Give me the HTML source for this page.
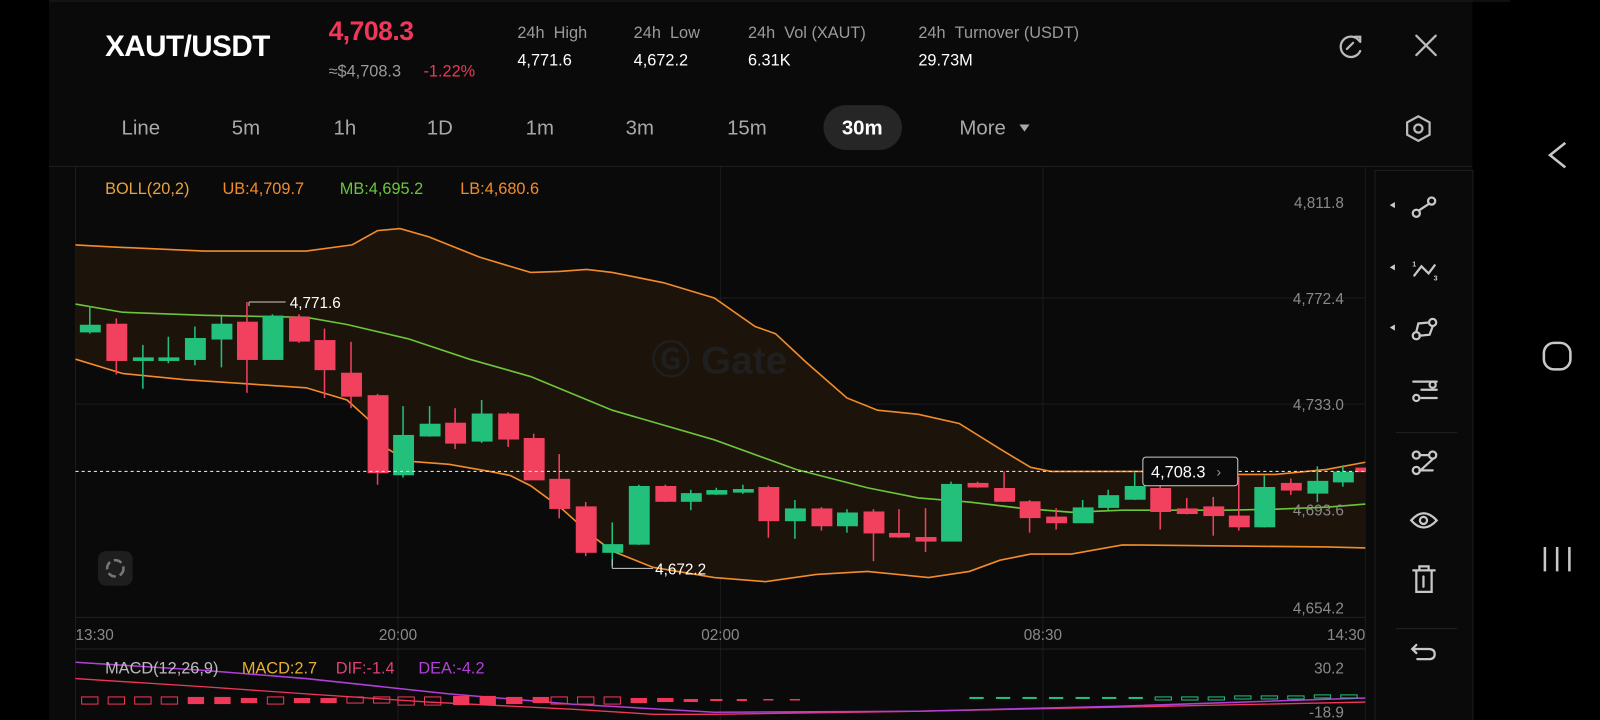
<!DOCTYPE html>
<html><head><meta charset="utf-8"><style>
html,body{margin:0;padding:0;background:#000;width:1600px;height:720px;overflow:hidden}
svg{display:block;font-family:"Liberation Sans",Arial,sans-serif}
</style></head><body>
<svg width="1600" height="720" viewBox="0 0 1568 705.6" preserveAspectRatio="none" xmlns="http://www.w3.org/2000/svg">
<rect width="1568" height="706" fill="#000"/>
<rect x="48" y="0" width="1395" height="706" fill="#0a0a0a"/>
<line x1="48" y1="1" x2="1480" y2="1" stroke="#1e1e1e"/>
<text x="103" y="55" fill="#fff" font-size="29" font-weight="bold" letter-spacing="-0.5">XAUT/USDT</text>
<text x="322" y="39" fill="#f0375a" font-size="26" font-weight="bold" letter-spacing="-0.5">4,708.3</text>
<text x="322" y="75" fill="#9a9a9a" font-size="16">≈$4,708.3</text>
<text x="415" y="75" fill="#f0375a" font-size="16">-1.22%</text>
<g font-size="16" fill="#9a9a9a">
<text x="507" y="37">24h&#160;&#160;High</text><text x="621" y="37">24h&#160;&#160;Low</text>
<text x="733" y="37">24h&#160;&#160;Vol (XAUT)</text><text x="900" y="37">24h&#160;&#160;Turnover (USDT)</text></g>
<g font-size="16" fill="#fff">
<text x="507" y="64">4,771.6</text><text x="621" y="64">4,672.2</text>
<text x="733" y="64">6.31K</text><text x="900" y="64">29.73M</text></g>
<g stroke="#bbb" stroke-width="2.2" fill="none" stroke-linecap="round">
<path d="M1332 40 A10 10 0 1 0 1333 50"/><path d="M1328 36 L1333 36 L1333 41"/><path d="M1320 48 L1326 42"/>
<path d="M1388 35 L1407 54 M1407 35 L1388 54"/>
</g>
<g font-size="20" fill="#a8a8a8" text-anchor="middle">
<text x="138" y="132">Line</text><text x="241" y="132">5m</text><text x="338" y="132">1h</text>
<text x="431" y="132">1D</text><text x="529" y="132">1m</text><text x="627" y="132">3m</text>
<text x="732" y="132">15m</text><text x="963" y="132">More</text></g>
<path d="M999 122 L1009 122 L1004 129Z" fill="#a8a8a8"/>
<rect x="807" y="103" width="77" height="44" rx="22" fill="#262626"/>
<text x="845" y="132" font-size="20" font-weight="bold" fill="#fff" text-anchor="middle">30m</text>
<g stroke="#bbb" stroke-width="2.2" fill="none"><path d="M1390 114 L1401 120 L1401 132 L1390 138 L1379 132 L1379 120Z"/><circle cx="1390" cy="126" r="4"/></g>
<line x1="48" y1="163" x2="1443" y2="163" stroke="#1e1e1e"/>
<g stroke="#1c1c1c"><line x1="74" y1="292" x2="1338" y2="292"/><line x1="74" y1="396" x2="1338" y2="396"/>
<line x1="390" y1="163" x2="390" y2="706"/><line x1="706" y1="163" x2="706" y2="706"/><line x1="1022" y1="163" x2="1022" y2="706"/>
<line x1="74" y1="163" x2="74" y2="706"/><line x1="1338" y1="163" x2="1338" y2="706"/></g>
<line x1="74" y1="605" x2="1338" y2="605" stroke="#222"/>
<line x1="74" y1="636" x2="1338" y2="636" stroke="#222"/>
<rect x="1347.5" y="167" width="96" height="540" fill="#0a0a0a" stroke="#1e1e1e"/>
<line x1="1368" y1="424" x2="1428" y2="424" stroke="#222"/><line x1="1368" y1="616" x2="1428" y2="616" stroke="#222"/>
<path d="M74 240 L110 242 L200 246 L300 246 L345 240 L370 226 L392 224 L420 232 L470 252 L520 267 L548 266 L575 264 L600 267 L650 277 L700 292 L740 320 L760 327 L790 355 L830 390 L860 402 L900 406 L940 415 L980 440 L1010 458 L1030 462 L1100 462 L1150 462 L1200 465 L1250 465 L1300 460 L1338 453 L1338 537 L1300 536 L1200 535 L1100 534 L1050 543 L1010 543 L980 549 L950 560 L910 566 L850 560 L800 563 L750 570 L700 566 L640 556 L600 540 L580 525 L550 498 L520 476 L500 466 L480 462 L440 455 L400 452 L380 440 L360 410 L340 392 L300 380 L240 376 L180 372 L120 366 L74 352Z" fill="#1c130a"/>
<g fill="none" stroke-width="1.6">
<path stroke="#f28c2a" d="M74 240 L110 242 L200 246 L300 246 L345 240 L370 226 L392 224 L420 232 L470 252 L520 267 L548 266 L575 264 L600 267 L650 277 L700 292 L740 320 L760 327 L790 355 L830 390 L860 402 L900 406 L940 415 L980 440 L1010 458 L1030 462 L1100 462 L1150 462 L1200 465 L1250 465 L1300 460 L1338 453"/>
<path stroke="#f28c2a" d="M74 352 L120 366 L180 372 L240 376 L300 380 L340 392 L360 410 L380 440 L400 452 L440 455 L480 462 L500 466 L520 476 L550 498 L580 525 L600 540 L640 556 L700 566 L750 570 L800 563 L850 560 L910 566 L950 560 L980 549 L1010 543 L1050 543 L1100 534 L1200 535 L1300 536 L1338 537"/>
<path stroke="#6cc63a" d="M74 298 L120 306 L200 309 L300 311 L340 318 L400 332 L460 352 L520 369 L600 402 L700 431 L780 460 L850 478 L900 488 L950 492 L1000 498 L1050 502 L1100 500 L1200 500 L1250 499 L1300 497 L1338 494"/>
</g>
<text x="705" y="366" font-size="38" font-weight="bold" fill="#1f1f1f" text-anchor="middle">Ⓖ Gate</text>
<g stroke-width="1.5">
<g stroke="#22c07a" fill="#22c07a">
<line x1="88" y1="300" x2="88" y2="327"/><rect x="79" y="319" width="19" height="6"/>
<line x1="140" y1="338" x2="140" y2="381"/><rect x="131" y="351" width="19" height="2"/>
<line x1="165" y1="330" x2="165" y2="356"/><rect x="156" y="351" width="19" height="2"/>
<line x1="191" y1="320" x2="191" y2="358"/><rect x="182" y="332" width="19" height="20"/>
<line x1="217" y1="310" x2="217" y2="360"/><rect x="208" y="318" width="19" height="14"/>
<line x1="267" y1="308" x2="267" y2="352"/><rect x="258" y="310" width="19" height="42"/>
<line x1="395" y1="398" x2="395" y2="468"/><rect x="386" y="427" width="19" height="38"/>
<line x1="421" y1="398" x2="421" y2="428"/><rect x="412" y="416" width="19" height="11"/>
<line x1="472" y1="392" x2="472" y2="434"/><rect x="463" y="406" width="19" height="26"/>
<line x1="600" y1="512" x2="600" y2="555"/><rect x="591" y="534" width="19" height="7"/>
<line x1="626" y1="475" x2="626" y2="534"/><rect x="617" y="477" width="19" height="56"/>
<line x1="677" y1="480" x2="677" y2="500"/><rect x="668" y="484" width="19" height="7"/>
<line x1="702" y1="478" x2="702" y2="485"/><rect x="693" y="481" width="19" height="3"/>
<line x1="728" y1="475" x2="728" y2="484"/><rect x="719" y="480" width="19" height="2"/>
<line x1="779" y1="490" x2="779" y2="528"/><rect x="770" y="499" width="19" height="11"/>
<line x1="830" y1="499" x2="830" y2="522"/><rect x="821" y="503" width="19" height="12"/>
<line x1="932" y1="472" x2="932" y2="530"/><rect x="923" y="475" width="19" height="55"/>
<line x1="1061" y1="490" x2="1061" y2="512"/><rect x="1052" y="498" width="19" height="14"/>
<line x1="1086" y1="480" x2="1086" y2="500"/><rect x="1077" y="486" width="19" height="11"/>
<line x1="1112" y1="463" x2="1112" y2="490"/><rect x="1103" y="477" width="19" height="12"/>
<line x1="1239" y1="466" x2="1239" y2="517"/><rect x="1230" y="478" width="19" height="38"/>
<line x1="1291" y1="457" x2="1291" y2="492"/><rect x="1282" y="472" width="19" height="11"/>
<line x1="1316" y1="456" x2="1316" y2="477"/><rect x="1307" y="463" width="19" height="9"/>
</g>
<g stroke="#f2405f" fill="#f2405f">
<line x1="114" y1="312" x2="114" y2="367"/><rect x="105" y="318" width="19" height="35"/>
<line x1="242" y1="296" x2="242" y2="385"/><rect x="233" y="316" width="19" height="36"/>
<line x1="293" y1="308" x2="293" y2="336"/><rect x="284" y="311" width="19" height="23"/>
<line x1="318" y1="322" x2="318" y2="390"/><rect x="309" y="334" width="19" height="28"/>
<line x1="344" y1="335" x2="344" y2="400"/><rect x="335" y="366" width="19" height="22"/>
<line x1="370" y1="386" x2="370" y2="475"/><rect x="361" y="388" width="19" height="75"/>
<line x1="446" y1="400" x2="446" y2="440"/><rect x="437" y="415" width="19" height="19"/>
<line x1="498" y1="404" x2="498" y2="438"/><rect x="489" y="406" width="19" height="24"/>
<line x1="523" y1="425" x2="523" y2="470"/><rect x="514" y="430" width="19" height="40"/>
<line x1="548" y1="445" x2="548" y2="508"/><rect x="539" y="470" width="19" height="28"/>
<line x1="574" y1="492" x2="574" y2="545"/><rect x="565" y="497" width="19" height="44"/>
<line x1="652" y1="475" x2="652" y2="492"/><rect x="643" y="477" width="19" height="14"/>
<line x1="753" y1="476" x2="753" y2="527"/><rect x="744" y="478" width="19" height="32"/>
<line x1="805" y1="497" x2="805" y2="520"/><rect x="796" y="499" width="19" height="16"/>
<line x1="856" y1="499" x2="856" y2="550"/><rect x="847" y="502" width="19" height="20"/>
<line x1="881" y1="499" x2="881" y2="527"/><rect x="872" y="523" width="19" height="3"/>
<line x1="907" y1="498" x2="907" y2="541"/><rect x="898" y="527" width="19" height="3"/>
<line x1="958" y1="472" x2="958" y2="478"/><rect x="949" y="474" width="19" height="3"/>
<line x1="984" y1="462" x2="984" y2="492"/><rect x="975" y="479" width="19" height="12"/>
<line x1="1009" y1="490" x2="1009" y2="522"/><rect x="1000" y="492" width="19" height="15"/>
<line x1="1035" y1="498" x2="1035" y2="519"/><rect x="1026" y="507" width="19" height="5"/>
<line x1="1137" y1="470" x2="1137" y2="519"/><rect x="1128" y="479" width="19" height="22"/>
<line x1="1163" y1="488" x2="1163" y2="504"/><rect x="1154" y="499" width="19" height="4"/>
<line x1="1189" y1="487" x2="1189" y2="525"/><rect x="1180" y="497" width="19" height="8"/>
<line x1="1214" y1="467" x2="1214" y2="520"/><rect x="1205" y="506" width="19" height="10"/>
<line x1="1265" y1="469" x2="1265" y2="485"/><rect x="1256" y="474" width="19" height="6"/>
<rect x="1329" y="459" width="9" height="3"/>
</g></g>
<line x1="74" y1="462" x2="1338" y2="462" stroke="#ddd" stroke-dasharray="3 3"/>
<rect x="1120" y="448" width="93" height="28" rx="3" fill="#0a0a0a" stroke="#ccc"/>
<text x="1128" y="468" font-size="16" fill="#fff">4,708.3</text><text x="1192" y="467" font-size="14" fill="#999">›</text>
<line x1="244" y1="296" x2="280" y2="296" stroke="#ccc"/><line x1="244" y1="296" x2="244" y2="300" stroke="#ccc"/>
<text x="284" y="302" font-size="15" fill="#fff">4,771.6</text>
<line x1="600" y1="557" x2="640" y2="557" stroke="#ccc"/><line x1="600" y1="548" x2="600" y2="557" stroke="#ccc"/>
<text x="642" y="563" font-size="15" fill="#fff">4,672.2</text>
<rect x="96" y="540" width="34" height="34" rx="8" fill="#1e1e1e"/>
<circle cx="113" cy="557" r="8" fill="none" stroke="#777" stroke-width="2.5" stroke-dasharray="8 4"/>
<g font-size="16"><text x="103" y="190" fill="#e8a33a">BOLL(20,2)</text><text x="218" y="190" fill="#f28c2a">UB:4,709.7</text>
<text x="333" y="190" fill="#6cc63a">MB:4,695.2</text><text x="451" y="190" fill="#f28c2a">LB:4,680.6</text></g>
<g font-size="15" fill="#8a8a8a" text-anchor="end"><text x="1317" y="204">4,811.8</text><text x="1317" y="298">4,772.4</text>
<text x="1317" y="402">4,733.0</text><text x="1317" y="505">4,693.6</text><text x="1317" y="601">4,654.2</text></g>
<g font-size="15" fill="#8a8a8a"><text x="74" y="627">13:30</text><text x="390" y="627" text-anchor="middle">20:00</text>
<text x="706" y="627" text-anchor="middle">02:00</text><text x="1022" y="627" text-anchor="middle">08:30</text><text x="1338" y="627" text-anchor="end">14:30</text>
<text x="1317" y="660" text-anchor="end">30.2</text><text x="1317" y="703" text-anchor="end">-18.9</text></g>
<path d="M74 665 L200 673 L300 680 L420 688 L560 695 L640 700 L700 700 L900 697 L1100 693 L1338 688" stroke="#f0375a" fill="none" stroke-width="1.3"/>
<path d="M74 649 L200 657 L300 665 L440 680 L560 690 L700 698 L900 697 L1100 692 L1338 684" stroke="#b040d8" fill="none" stroke-width="1.5"/>
<g fill="none" stroke="#f0375a" stroke-width="1">
<rect x="80" y="683" width="16" height="7"/><rect x="106" y="683" width="16" height="7"/><rect x="132" y="683" width="16" height="7"/><rect x="158" y="683" width="16" height="7"/>
<rect x="262" y="683" width="16" height="7"/><rect x="340" y="683" width="16" height="6"/><rect x="366" y="683" width="16" height="6"/>
<rect x="390" y="683" width="16" height="8"/><rect x="416" y="683" width="16" height="8"/>
<rect x="540" y="683" width="16" height="7"/><rect x="566" y="683" width="16" height="7"/><rect x="592" y="683" width="16" height="7"/></g>
<g fill="#f0375a"><rect x="184" y="683" width="16" height="7"/><rect x="210" y="683" width="16" height="7"/><rect x="236" y="684" width="16" height="5"/>
<rect x="288" y="684" width="16" height="5"/><rect x="314" y="684" width="16" height="5"/>
<rect x="444" y="682" width="16" height="9"/><rect x="470" y="682" width="16" height="9"/><rect x="496" y="683" width="16" height="7"/><rect x="522" y="683" width="16" height="6"/>
<rect x="618" y="684" width="16" height="5"/><rect x="644" y="684" width="16" height="4"/><rect x="670" y="685" width="14" height="3"/>
<rect x="696" y="685" width="12" height="2"/><rect x="722" y="685" width="10" height="2"/><rect x="748" y="685" width="10" height="1.5"/><rect x="774" y="685" width="10" height="1.5"/></g>
<g fill="#22c07a"><rect x="950" y="683" width="14" height="2"/><rect x="976" y="683" width="14" height="2"/><rect x="1002" y="683" width="14" height="2"/><rect x="1028" y="683" width="14" height="2"/><rect x="1054" y="683" width="14" height="2"/><rect x="1080" y="683" width="14" height="2"/><rect x="1106" y="683" width="14" height="2"/></g>
<g fill="none" stroke="#22c07a"><rect x="1132" y="683" width="16" height="3"/><rect x="1158" y="683" width="16" height="3"/><rect x="1184" y="683" width="16" height="3"/><rect x="1210" y="682" width="16" height="3"/><rect x="1236" y="682" width="16" height="3"/><rect x="1262" y="682" width="16" height="3"/><rect x="1288" y="681" width="16" height="3"/><rect x="1314" y="681" width="16" height="3"/></g>
<g font-size="16"><text x="103" y="660" fill="#bbb">MACD(12,26,9)</text><text x="237" y="660" fill="#e8b030">MACD:2.7</text>
<text x="329" y="660" fill="#e0407a">DIF:-1.4</text><text x="410" y="660" fill="#b040d8">DEA:-4.2</text></g>
<g fill="#ccc"><path d="M1362 201 L1367 198 L1367 204Z"/><path d="M1362 262 L1367 259 L1367 265Z"/><path d="M1362 321 L1367 318 L1367 324Z"/></g>
<g stroke="#c8c8c8" stroke-width="2.2" fill="none" stroke-linecap="round">
<circle cx="1388" cy="209" r="3.5"/><circle cx="1403" cy="197" r="3.5"/><path d="M1391 206 L1400 200"/>
<path d="M1386 270 L1393 261 L1400 268 L1406 260"/>
<circle cx="1388" cy="329" r="3.5"/><circle cx="1404" cy="316" r="3.5"/><path d="M1391 329 L1401 328 L1404 320 M1388 325 L1390 317 L1400 316"/>
<path d="M1385 374 L1408 374 M1393 382 L1408 382 M1393 390 L1408 390"/><circle cx="1388" cy="390" r="3"/><circle cx="1404" cy="377" r="3"/>
<circle cx="1388" cy="446" r="3.5"/><circle cx="1404" cy="446" r="3.5"/><circle cx="1388" cy="461" r="3.5"/><path d="M1391 446 L1400 446 M1404 450 L1392 461 M1391 461 L1404 461"/>
<path d="M1383 510 Q1395 496 1408 510 Q1395 524 1383 510Z"/><circle cx="1395" cy="510" r="3.5"/>
<path d="M1385 559 L1406 559 M1391 559 L1391 555 L1400 555 L1400 559 M1388 559 L1388 580 L1403 580 L1403 559 M1395 565 L1395 575"/>
<path d="M1388 632 L1384 636 L1388 640 M1384 636 L1400 636 Q1406 636 1406 641 Q1406 646 1400 646 L1389 646"/>
</g>
<g fill="#c8c8c8" font-size="7" font-weight="bold"><text x="1384" y="261">1</text><text x="1405" y="275">3</text></g>
<g stroke="#c8c8c8" stroke-width="2.5" fill="none"><path d="M1534 140 L1519 152 L1534 164"/>
<rect x="1513" y="336" width="26" height="26" rx="10"/>
<path d="M1514 536 L1514 560 M1526 536 L1526 560 M1538 536 L1538 560"/></g>
</svg>
</body></html>
